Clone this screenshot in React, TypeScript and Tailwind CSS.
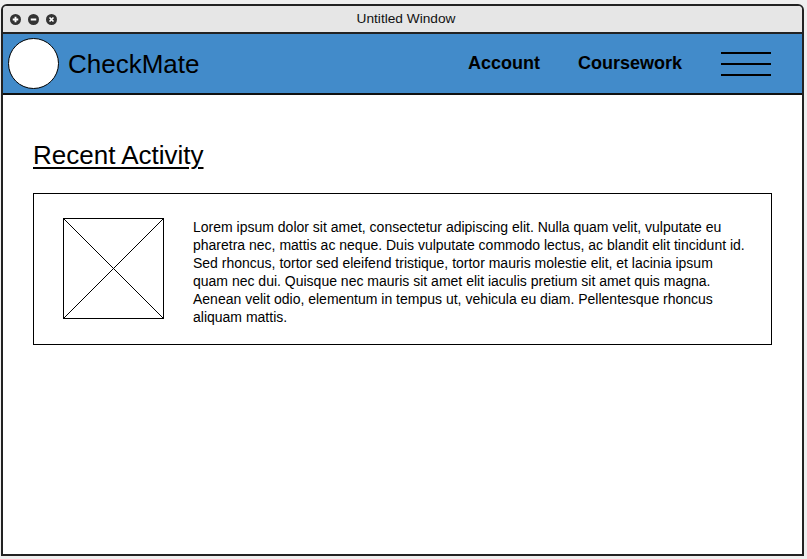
const navLinks = ["Account", "Coursework"];

function TitleButton({ kind }: { kind: "plus" | "minus" | "close" }) {
  return (
    <svg viewBox="0 0 10 10" className="h-[11px] w-[11px]" aria-hidden="true">
      <circle cx="5" cy="5" r="5" fill="#333" />
      {kind === "plus" && <path d="M2.5 5h5M5 2.5v5" stroke="#fff" strokeWidth="1.7" />}
      {kind === "minus" && <path d="M2.5 5h5" stroke="#fff" strokeWidth="1.7" />}
      {kind === "close" && <path d="M3.2 3.2l3.6 3.6M6.8 3.2l-3.6 3.6" stroke="#fff" strokeWidth="1.5" />}
    </svg>
  );
}

function ImagePlaceholder() {
  return (
    <svg viewBox="0 0 101 101" className="h-[101px] w-[101px] shrink-0" aria-hidden="true">
      <rect x="0.5" y="0.5" width="100" height="100" fill="#fff" stroke="#000" />
      <path d="M0.5 0.5L100.5 100.5M100.5 0.5L0.5 100.5" stroke="#000" strokeWidth="1" />
    </svg>
  );
}

export default function App() {
  return (
    <div className="h-[559px] w-[807px] overflow-hidden bg-[#efefef] pt-[4px] pl-[1px] font-['Liberation_Sans',Arial,sans-serif] text-black">
      <div className="flex h-[552px] w-[803px] flex-col overflow-hidden rounded-t-[6px] border-2 border-[#222] bg-white">
        {/* title bar */}
        <div className="grid h-[28px] shrink-0 grid-cols-[1fr_auto_1fr] items-center border-b-2 border-[#222] bg-[#e6e6e6] pl-[7px]">
          <div className="flex items-center gap-[7px]">
            <TitleButton kind="plus" />
            <TitleButton kind="minus" />
            <TitleButton kind="close" />
          </div>
          <span className="text-[13.7px] text-[#111]">Untitled Window</span>
          <div />
        </div>

        {/* app header */}
        <header className="flex h-[61px] shrink-0 items-center border-b-2 border-[#111] bg-[#428bca] pl-[5px] pr-[31px]">
          <div className="h-[51px] w-[51px] rounded-full border border-black bg-white" />
          <span className="ml-[9px] text-[26px] leading-none">CheckMate</span>
          <nav className="ml-auto flex items-center gap-[38px]">
            {navLinks.map((link) => (
              <a key={link} href="#" className="text-[18px] font-bold">
                {link}
              </a>
            ))}
          </nav>
          <svg viewBox="0 0 50 24" className="ml-[39px] h-[24px] w-[50px]" aria-hidden="true">
            <path d="M0 1h50M0 12h50M0 23h50" stroke="#000" strokeWidth="2" />
          </svg>
        </header>

        {/* content */}
        <main className="px-[30px] pt-[45px]">
          <h1 className="text-[26px] leading-[30px] underline underline-offset-[3px] decoration-[2px]">Recent Activity</h1>
          <div className="mt-[23px] flex h-[152px] w-[739px] items-start border border-black pt-[24px] pl-[29px]">
            <ImagePlaceholder />
            <p className="ml-[29px] w-[555px] text-[14px] leading-[18px]">
              Lorem ipsum dolor sit amet, consectetur adipiscing elit. Nulla quam velit, vulputate eu pharetra nec,
              mattis ac neque. Duis vulputate commodo lectus, ac blandit elit tincidunt id. Sed rhoncus, tortor sed
              eleifend tristique, tortor mauris molestie elit, et lacinia ipsum quam nec dui. Quisque nec mauris sit
              amet elit iaculis pretium sit amet quis magna. Aenean velit odio, elementum in tempus ut, vehicula eu
              diam. Pellentesque rhoncus aliquam mattis.
            </p>
          </div>
        </main>
      </div>
    </div>
  );
}
